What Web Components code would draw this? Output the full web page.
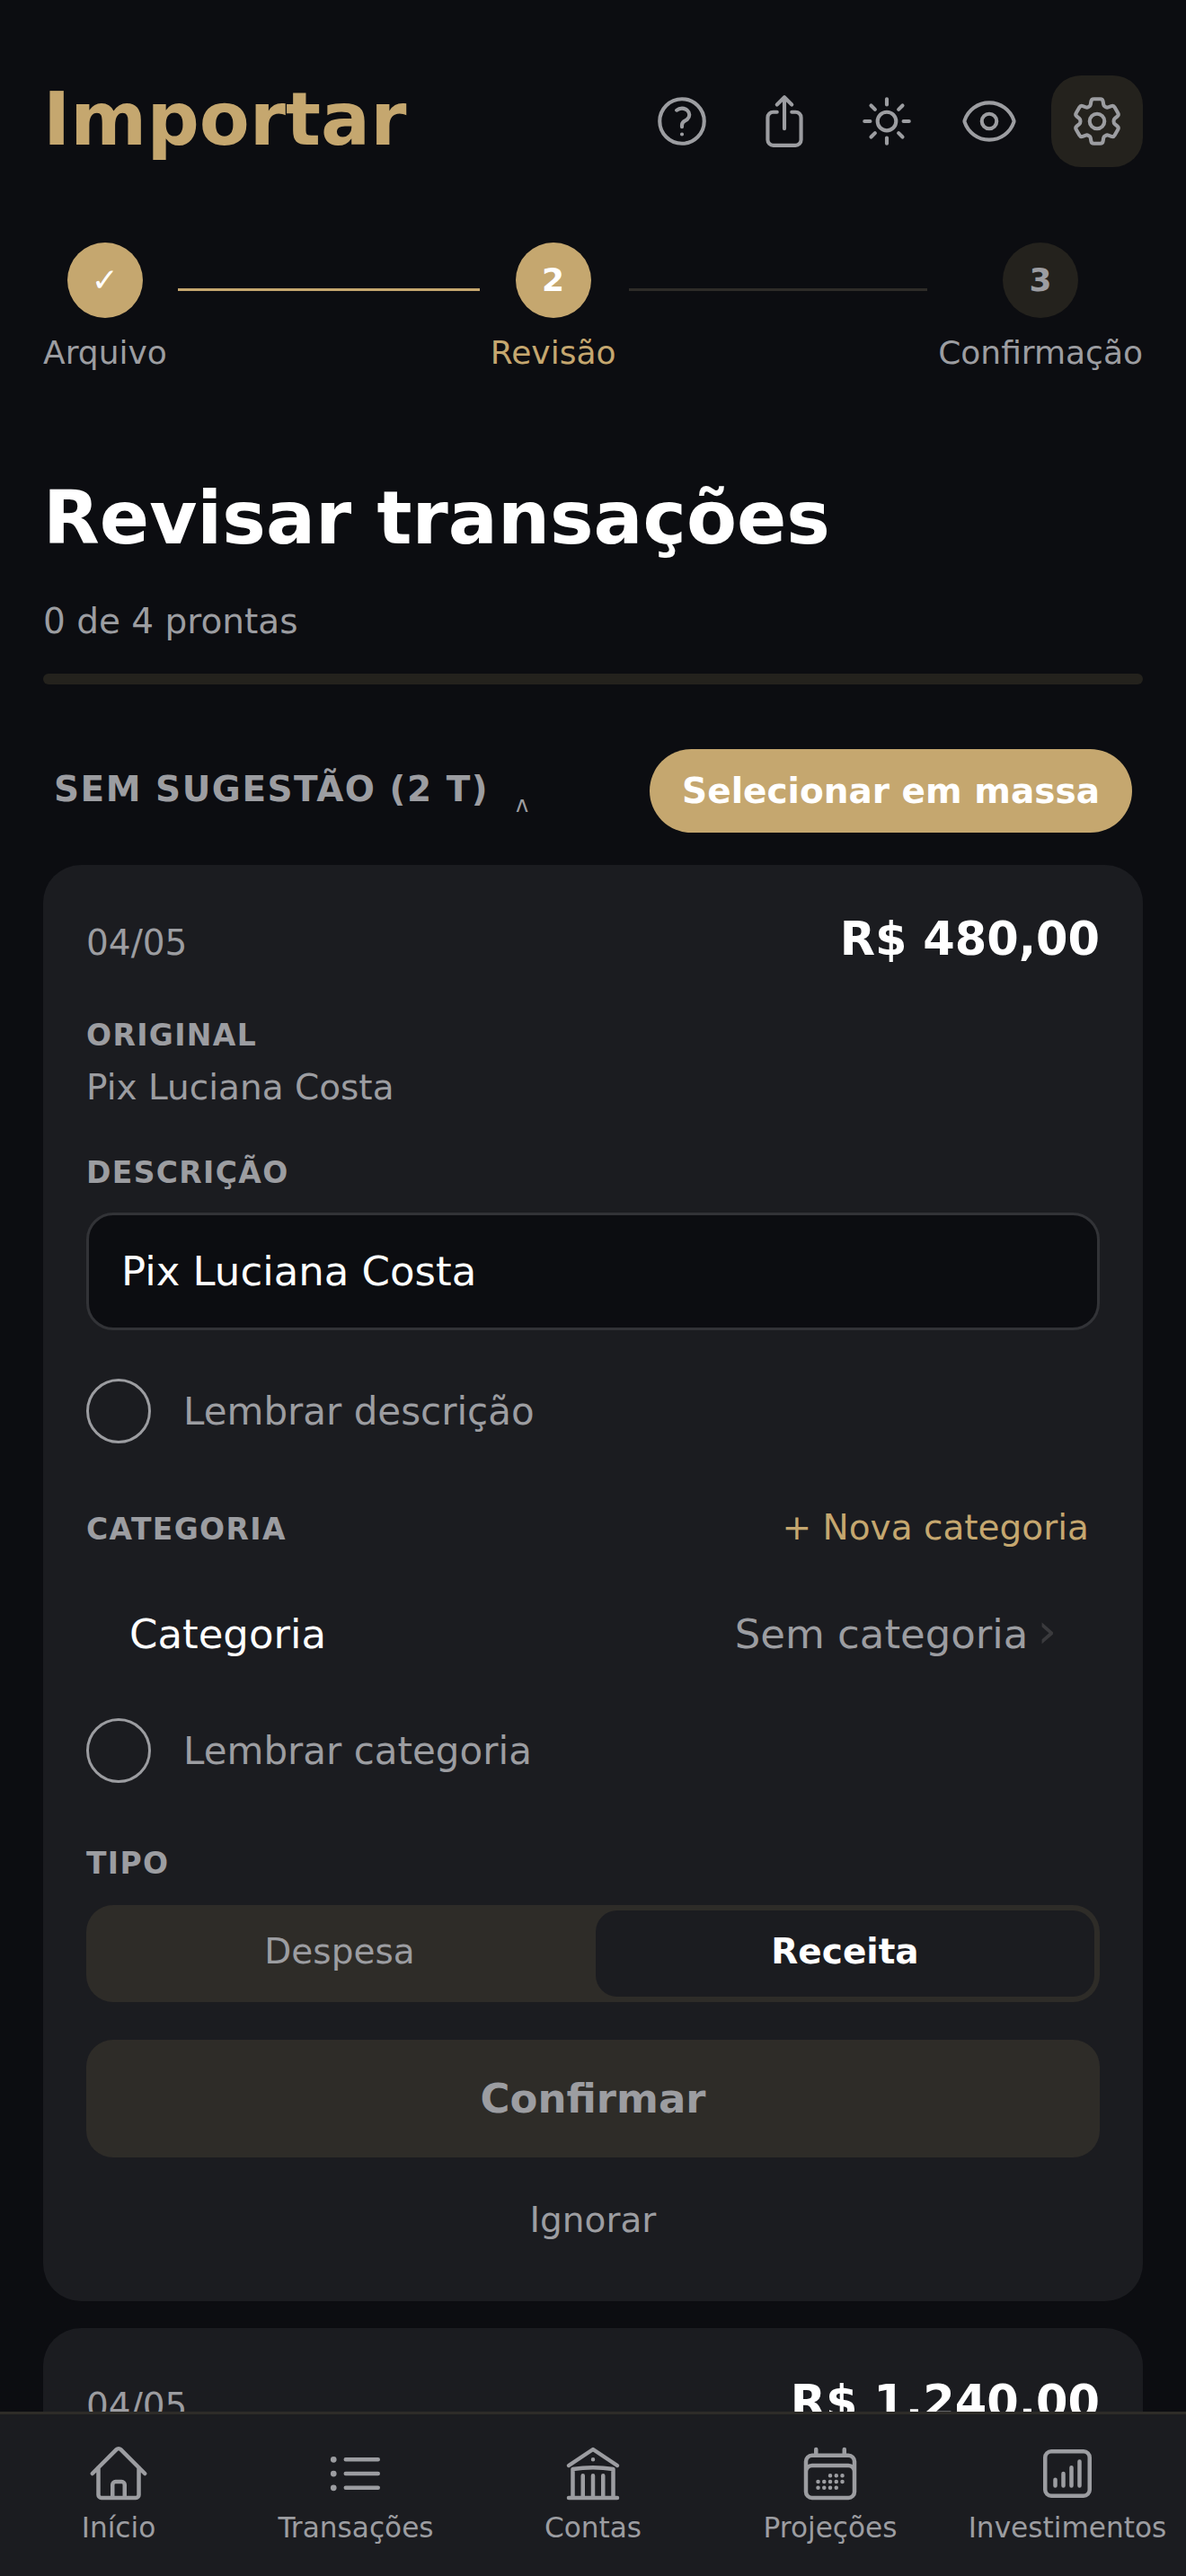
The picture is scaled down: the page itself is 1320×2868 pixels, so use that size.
<!DOCTYPE html>
<html lang="pt-BR">
<head>
<meta charset="utf-8">
<title>Importar</title>
<style>
  html, body { margin: 0; padding: 0; background: #0c0d11; }
  body {
    width: 1320px;
    height: 2868px;
    overflow: hidden;
    position: relative;
    font-family: "DejaVu Sans", sans-serif;
    --gold: #c5a76f;
    --muted: #9c9da1;
    --surface: #1b1c20;
    --raised: #2e2c28;
  }
</style>
</head>
<body>
<import-screen></import-screen>
<bottom-nav></bottom-nav>

<script>
const ICONS = {
  question: '<path d="M9.879 7.519c1.171-1.025 3.071-1.025 4.242 0 1.172 1.025 1.172 2.687 0 3.712-.203.179-.43.326-.67.442-.745.361-1.45.999-1.45 1.827v.75M21 12a9 9 0 1 1-18 0 9 9 0 0 1 18 0Zm-9 5.25h.008v.008H12v-.008Z"/>',
  share: '<path d="M9 8.25H7.5a2.25 2.25 0 0 0-2.25 2.25v9a2.25 2.25 0 0 0 2.25 2.25h9a2.25 2.25 0 0 0 2.25-2.25v-9a2.25 2.25 0 0 0-2.25-2.25H15m0-3-3-3m0 0-3 3m3-3V15"/>',
  sun: '<path d="M12 3v2.25m6.364.386-1.591 1.591M21 12h-2.25m-.386 6.364-1.591-1.591M12 18.75V21m-4.773-4.227-1.591 1.591M5.25 12H3m4.227-4.773L5.636 5.636M15.75 12a3.75 3.75 0 1 1-7.5 0 3.75 3.75 0 0 1 7.5 0Z"/>',
  eye: '<path d="M2.036 12.322a1.012 1.012 0 0 1 0-.639C3.423 7.51 7.36 4.5 12 4.5c4.638 0 8.573 3.007 9.963 7.178.07.207.07.431 0 .639C20.577 16.49 16.64 19.5 12 19.5c-4.638 0-8.573-3.007-9.963-7.178Z"/><path d="M15 12a3 3 0 1 1-6 0 3 3 0 0 1 6 0Z"/>',
  gear: '<path d="M9.594 3.94c.09-.542.56-.94 1.11-.94h2.593c.55 0 1.02.398 1.11.94l.213 1.281c.063.374.313.686.645.87.074.04.147.083.22.127.325.196.72.257 1.075.124l1.217-.456a1.125 1.125 0 0 1 1.37.49l1.296 2.247a1.125 1.125 0 0 1-.26 1.431l-1.003.827c-.293.241-.438.613-.43.992a7.723 7.723 0 0 1 0 .255c-.008.378.137.75.43.991l1.004.827c.424.35.534.955.26 1.43l-1.298 2.247a1.125 1.125 0 0 1-1.369.491l-1.217-.456c-.355-.133-.75-.072-1.076.124a6.47 6.47 0 0 1-.22.128c-.331.183-.581.495-.644.869l-.213 1.281c-.09.543-.56.94-1.11.94h-2.594c-.55 0-1.019-.398-1.11-.94l-.213-1.281c-.062-.374-.312-.686-.644-.87a6.52 6.52 0 0 1-.22-.127c-.325-.196-.72-.257-1.076-.124l-1.217.456a1.125 1.125 0 0 1-1.369-.49l-1.297-2.247a1.125 1.125 0 0 1 .26-1.431l1.004-.827c.292-.24.437-.613.43-.991a6.932 6.932 0 0 1 0-.255c.007-.38-.138-.751-.43-.992l-1.004-.827a1.125 1.125 0 0 1-.26-1.43l1.297-2.247a1.125 1.125 0 0 1 1.37-.491l1.216.456c.356.133.751.072 1.076-.124.072-.044.146-.086.22-.128.332-.183.582-.495.644-.869l.214-1.28Z"/><path d="M15 12a3 3 0 1 1-6 0 3 3 0 0 1 6 0Z"/>',
  home: '<path d="m2.25 12 8.954-8.955c.44-.439 1.152-.439 1.591 0L21.75 12M4.5 9.75v10.125c0 .621.504 1.125 1.125 1.125H9.75v-4.875c0-.621.504-1.125 1.125-1.125h2.25c.621 0 1.125.504 1.125 1.125V21h4.125c.621 0 1.125-.504 1.125-1.125V9.75M8.25 21h8.25"/>',
  list: '<path d="M8.25 6.75h12M8.25 12h12m-12 5.25h12M3.75 6.75h.007v.008H3.75V6.75Zm.375 0a.375.375 0 1 1-.75 0 .375.375 0 0 1 .75 0ZM3.75 12h.007v.008H3.75V12Zm.375 0a.375.375 0 1 1-.75 0 .375.375 0 0 1 .75 0Zm-.375 5.25h.007v.008H3.75v-.008Zm.375 0a.375.375 0 1 1-.75 0 .375.375 0 0 1 .75 0Z"/>',
  bank: '<path d="M12 21v-8.25M15.75 21v-8.25M8.25 21v-8.25M3 9l9-6 9 6m-1.5 12V10.332A48.36 48.36 0 0 0 12 9.75c-2.551 0-5.056.2-7.5.582V21M3 21h18M12 6.75h.008v.008H12V6.75Z"/>',
  calendar: '<path d="M6.75 3v2.25M17.25 3v2.25M3 18.75V7.5a2.25 2.25 0 0 1 2.25-2.25h13.5A2.25 2.25 0 0 1 21 7.5v11.25m-18 0A2.25 2.25 0 0 0 5.25 21h13.5A2.25 2.25 0 0 0 21 18.75m-18 0v-7.5A2.25 2.25 0 0 1 5.25 9h13.5A2.25 2.25 0 0 1 21 11.25v7.5m-9-6h.008v.008H12v-.008ZM12 15h.008v.008H12V15Zm0 2.25h.008v.008H12v-.008ZM9.75 15h.008v.008H9.75V15Zm0 2.25h.008v.008H9.75v-.008ZM7.5 15h.008v.008H7.5V15Zm0 2.25h.008v.008H7.5v-.008Zm6.75-4.5h.008v.008h-.008v-.008Zm0 2.25h.008v.008h-.008V15Zm0 2.25h.008v.008h-.008v-.008Zm2.25-4.5h.008v.008H16.5v-.008Zm0 2.25h.008v.008H16.5V15Z"/>',
  chart: '<path d="M7.5 14.25v2.25m3-4.5v4.5m3-6.75v6.75m3-9v9M6 20.25h12A2.25 2.25 0 0 0 20.25 18V6A2.25 2.25 0 0 0 18 3.75H6A2.25 2.25 0 0 0 3.75 6v12A2.25 2.25 0 0 0 6 20.25Z"/>'
};

class UiIcon extends HTMLElement {
  connectedCallback() {
    const size = this.getAttribute('size') || 66;
    this.attachShadow({ mode: 'open' });
    this.shadowRoot.innerHTML = `
      <style>
        :host { display: block; width: ${size}px; height: ${size}px; color: var(--muted); }
        svg { display: block; width: 100%; height: 100%; fill: none; stroke: currentColor; stroke-width: 1.5; stroke-linecap: round; stroke-linejoin: round; }
      </style>
      <svg viewBox="0 0 24 24">${ICONS[this.getAttribute('name')]}</svg>
    `;
  }
}

class TopHeader extends HTMLElement {
  constructor() {
    super();
    this.attachShadow({ mode: 'open' });
    this.shadowRoot.innerHTML = `
      <style>
        :host { display: flex; align-items: center; justify-content: space-between; padding: 84px 48px 0; }
        h1 { margin: 0 0 4px; font-size: 81.6px; line-height: 98px; font-weight: 700; color: var(--gold); }
        .actions { display: flex; gap: 12px; }
        .btn { width: 102px; height: 102px; border-radius: 33px; display: flex; align-items: center; justify-content: center; }
        .btn.on { background: #24221d; margin-left: 6px; }
      </style>
      <h1>Importar</h1>
      <div class="actions">
        <div class="btn"><ui-icon name="question"></ui-icon></div>
        <div class="btn"><ui-icon name="share"></ui-icon></div>
        <div class="btn"><ui-icon name="sun"></ui-icon></div>
        <div class="btn"><ui-icon name="eye"></ui-icon></div>
        <div class="btn on"><ui-icon name="gear"></ui-icon></div>
      </div>
    `;
  }
}

class ImportStepper extends HTMLElement {
  constructor() {
    super();
    this.attachShadow({ mode: 'open' });
    this.shadowRoot.innerHTML = `
      <style>
        :host { display: flex; align-items: flex-start; gap: 12px; padding: 84px 48px 0; }
        .step { display: flex; flex-direction: column; align-items: center; gap: 12px; font-size: 36px; line-height: 54px; color: var(--muted); }
        .dot { width: 84px; height: 84px; border-radius: 50%; background: #24221d; display: flex; align-items: center; justify-content: center; font-size: 36px; font-weight: 700; }
        .done .dot, .current .dot { background: var(--gold); color: #fff; }
        .current { color: var(--gold); }
        .line { flex: 1; height: 3px; margin-top: 51px; background: #2e2c28; }
        .line.on { flex: 0 0 336px; background: var(--gold); }
        .line.rest { margin-left: 2px; }
      </style>
      <div class="step done"><div class="dot">✓</div>Arquivo</div>
      <div class="line on"></div>
      <div class="step current"><div class="dot">2</div>Revisão</div>
      <div class="line rest"></div>
      <div class="step"><div class="dot">3</div>Confirmação</div>
    `;
  }
}

class ReviewSummary extends HTMLElement {
  constructor() {
    super();
    this.attachShadow({ mode: 'open' });
    this.shadowRoot.innerHTML = `
      <style>
        :host { display: block; padding: 106px 48px 0; }
        h2 { margin: 0; font-size: 81.6px; line-height: 102px; font-weight: 700; color: #fff; }
        p { margin: 37px 0 0; font-size: 39px; line-height: 54px; color: var(--muted); }
        .bar { margin-top: 31px; height: 12px; border-radius: 6px; background: #24221d; }
      </style>
      <h2>Revisar transações</h2>
      <p>0 de 4 prontas</p>
      <div class="bar"></div>
    `;
  }
}

class GroupHeader extends HTMLElement {
  constructor() {
    super();
    this.attachShadow({ mode: 'open' });
    this.shadowRoot.innerHTML = `
      <style>
        :host { display: flex; align-items: center; justify-content: space-between; padding: 72px 60px 36px; }
        .title { display: flex; align-items: center; gap: 30px; color: var(--muted); font-size: 39px; font-weight: 700; letter-spacing: 1.5px; line-height: 60px; }
        .title span:first-child { margin-bottom: 4px; }
        .caret { font-size: 24px; font-weight: 400; letter-spacing: 0; margin-top: 30px; }
        .bulk { height: 93px; padding: 0 36px; border-radius: 47px; background: var(--gold); color: #fff; font-size: 39px; font-weight: 700; display: flex; align-items: center; }
      </style>
      <div class="title"><span>SEM SUGESTÃO (2 T)</span><span class="caret">ʌ</span></div>
      <div class="bulk">Selecionar em massa</div>
    `;
  }
}

class TxCard extends HTMLElement {
  constructor() {
    super();
    this.attachShadow({ mode: 'open' });
    const name = this.getAttribute('name');
    const amount = this.getAttribute('amount');
    const date = this.getAttribute('date');
    const body = name ? `
      <div class="label orig">ORIGINAL</div>
      <div class="value">${name}</div>
      <div class="label desc">DESCRIÇÃO</div>
      <div class="input">${name}</div>
      <div class="check a"><i></i>Lembrar descrição</div>
      <div class="cat-head"><span class="label">CATEGORIA</span><span class="new">+ Nova categoria</span></div>
      <div class="cat-row"><span>Categoria</span><span class="cat-val">Sem categoria<small>›</small></span></div>
      <div class="check b"><i></i>Lembrar categoria</div>
      <div class="label tipo">TIPO</div>
      <div class="seg"><div>Despesa</div><div class="on">Receita</div></div>
      <div class="confirm">Confirmar</div>
      <div class="skip">Ignorar</div>
    ` : '';
    this.shadowRoot.innerHTML = `
      <style>
        :host { display: block; margin: 0 48px 30px; padding: 52px 48px 63px; border-radius: 42px; background: var(--surface); }
        .head { display: flex; align-items: center; justify-content: space-between; }
        .date { font-size: 39px; color: var(--muted); margin-top: 1px; }
        .amount { font-size: 51px; font-weight: 700; color: #fff; line-height: 72px; margin-top: -5px; }
        .label { font-size: 33px; line-height: 48px; font-weight: 700; letter-spacing: 1.35px; color: var(--muted); }
        .value { font-size: 39px; line-height: 54px; color: var(--muted); margin-top: 7px; }
        .orig { margin-top: 47px; }
        .desc { margin-top: 44px; }
        .input { margin-top: 20px; height: 125px; border: 3px solid #323337; border-radius: 30px; background: #0c0d11; display: flex; align-items: center; padding: 0 36px; font-size: 45px; color: #fff; }
        .check { display: flex; align-items: center; gap: 36px; height: 72px; font-size: 42px; color: var(--muted); }
        .check i { width: 66px; height: 66px; border: 3px solid var(--muted); border-radius: 50%; }
        .check.a { margin-top: 54px; }
        .cat-head { display: flex; justify-content: space-between; align-items: center; margin-top: 72px; }
        .new { font-size: 39px; color: var(--gold); padding-right: 12px; margin-top: -6px; }
        .cat-row { display: flex; align-items: center; justify-content: space-between; height: 120px; margin-top: 32px; padding: 0 48px; font-size: 45px; color: #fff; }
        .cat-val { display: flex; align-items: center; color: var(--muted); gap: 10px; }
        .cat-val small { font-size: 54px; line-height: 1; color: #3a3a3d; margin-top: -6px; }
        .check.b { margin-top: 34px; }
        .tipo { margin-top: 66px; }
        .seg { display: grid; grid-template-columns: 552px 555px; gap: 9px; margin-top: 22px; height: 108px; padding: 6px; box-sizing: border-box; border-radius: 30px; background: var(--raised); font-size: 39px; }
        .seg div { display: flex; align-items: center; justify-content: center; padding-bottom: 6px; color: var(--muted); border-radius: 24px; }
        .seg .on { background: var(--surface); color: #fff; font-weight: 700; }
        .confirm { margin-top: 42px; height: 131px; border-radius: 30px; background: var(--raised); display: flex; align-items: center; justify-content: center; font-size: 45px; font-weight: 700; color: var(--muted); }
        .skip { margin-top: 43px; text-align: center; font-size: 39px; line-height: 54px; color: var(--muted); }
      </style>
      <div class="head"><span class="date">${date}</span><span class="amount">${amount}</span></div>
      ${body}
    `;
  }
}

class BottomNav extends HTMLElement {
  constructor() {
    super();
    this.attachShadow({ mode: 'open' });
    const items = [
      ['home', 'Início'], ['list', 'Transações'], ['bank', 'Contas'],
      ['calendar', 'Projeções'], ['chart', 'Investimentos']
    ];
    this.shadowRoot.innerHTML = `
      <style>
        :host { position: absolute; left: 0; right: 0; bottom: 0; height: 183px; box-sizing: border-box; border-top: 3px solid var(--raised); background: var(--surface); display: grid; grid-template-columns: repeat(5, 1fr); }
        .item { display: flex; flex-direction: column; align-items: center; padding-top: 30px; font-size: 31.2px; line-height: 42px; color: var(--muted); white-space: nowrap; }
        .item span { margin-top: 3px; }
      </style>
      ${items.map(([icon, label]) => `<div class="item"><ui-icon name="${icon}" size="72"></ui-icon><span>${label}</span></div>`).join('')}
    `;
  }
}

class ImportScreen extends HTMLElement {
  constructor() {
    super();
    this.attachShadow({ mode: 'open' });
    this.shadowRoot.innerHTML = `
      <style>:host { display: block; }</style>
      <top-header></top-header>
      <import-stepper></import-stepper>
      <review-summary></review-summary>
      <group-header></group-header>
      <tx-card date="04/05" amount="R$ 480,00" name="Pix Luciana Costa"></tx-card>
      <tx-card date="04/05" amount="R$ 1.240,00"></tx-card>
    `;
  }
}

customElements.define('ui-icon', UiIcon);
customElements.define('top-header', TopHeader);
customElements.define('import-stepper', ImportStepper);
customElements.define('review-summary', ReviewSummary);
customElements.define('group-header', GroupHeader);
customElements.define('tx-card', TxCard);
customElements.define('bottom-nav', BottomNav);
customElements.define('import-screen', ImportScreen);
</script>
</body>
</html>
